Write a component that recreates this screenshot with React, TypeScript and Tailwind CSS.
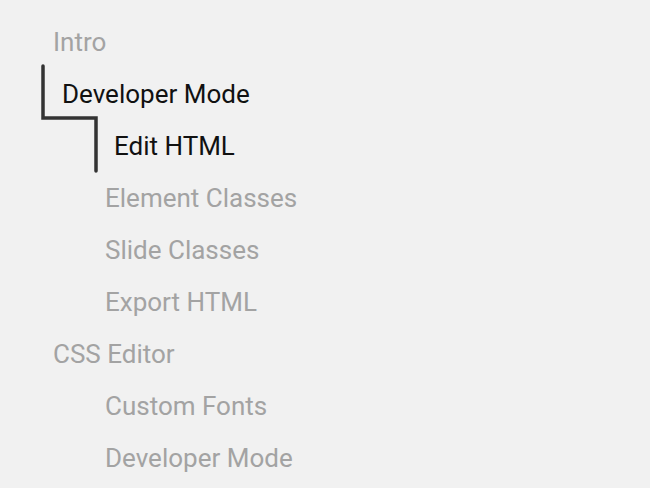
import React from 'react';

const items = [
  { label: 'Intro', level: 0, active: false },
  { label: 'Developer Mode', level: 0, active: true },
  { label: 'Edit HTML', level: 1, active: true },
  { label: 'Element Classes', level: 1, active: false },
  { label: 'Slide Classes', level: 1, active: false },
  { label: 'Export HTML', level: 1, active: false },
  { label: 'CSS Editor', level: 0, active: false },
  { label: 'Custom Fonts', level: 1, active: false },
  { label: 'Developer Mode', level: 1, active: false },
];

const App = () => {
  return (
    <div className="min-h-screen bg-[#f1f1f1] font-['Roboto',sans-serif] overflow-hidden">
      <nav className="relative pt-[16px]">
        {/* progress path for the active section */}
        <svg className="absolute left-0 top-0" width="120" height="200" viewBox="0 0 120 200" fill="none">
          <path d="M43 66 V118 H96 V171" stroke="#333333" strokeWidth="3.5" strokeLinecap="round" strokeLinejoin="miter" />
        </svg>
        <ul>
          {items.map((item, i) => {
            const pad = item.level === 0
              ? item.active ? 'pl-[62px]' : 'pl-[53px]'
              : item.active ? 'pl-[114px]' : 'pl-[105px]';
            return (
              <li
                key={i}
                className={`h-[52px] flex items-center text-[26px] leading-none ${pad} ${item.active ? 'text-[#111111]' : 'text-[#a3a3a3]'}`}
              >
                {item.label}
              </li>
            );
          })}
        </ul>
      </nav>
    </div>
  );
};

export default App;
